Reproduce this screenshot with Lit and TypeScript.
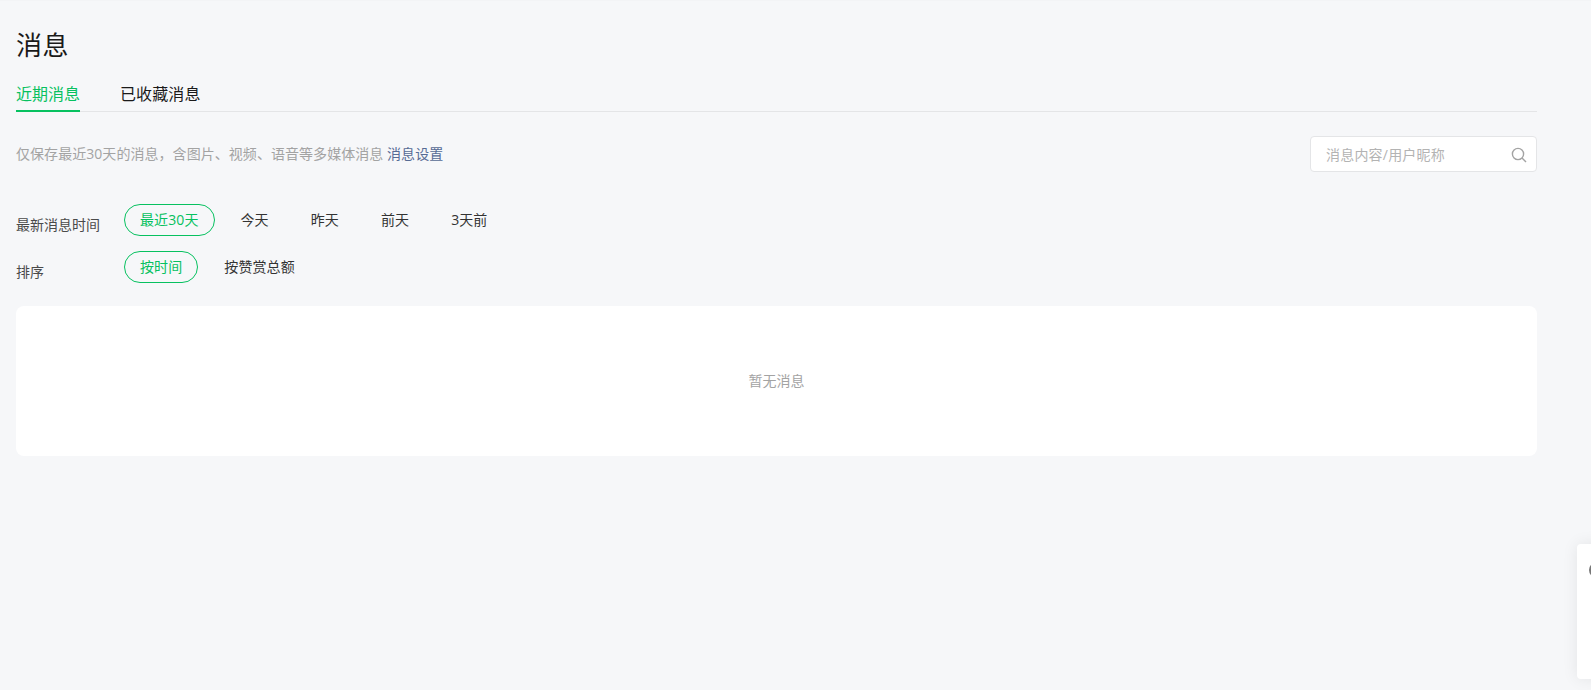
import { LitElement, html, css } from "lit";
import { customElement } from "lit/decorators.js";

@customElement("app-root")
export class AppRoot extends LitElement {
  static styles = css`
    :host {
      display: block;
      height: 690px;
      overflow: hidden;
      position: relative;
      background: #f6f7f9;
      font-family: "Open Sans", "Noto Sans CJK SC", "Liberation Sans", sans-serif;
      color: #1a1a1a;
    }
    .topshade { position: absolute; left: 0; right: 0; top: 0; height: 1px; background: #f3f4f6; }
    .page { width: 1521px; padding: 28px 0 0 16px; }
    h1 { margin: 0; font-size: 26px; line-height: 34px; font-weight: 400; color: #1a1a1a; letter-spacing: 0.5px; }
    .tabs { display: flex; gap: 40px; margin-top: 16px; border-bottom: 1px solid #e4e5e7; height: 34px; box-sizing: border-box; }
    .tab { font-size: 16px; line-height: 24px; height: 34px; box-sizing: border-box; padding-top: 4px; color: #1a1a1a; letter-spacing: 0.1px; }
    .tab.on { color: #07c160; border-bottom: 2px solid #07c160; letter-spacing: 0; }
    .hint-row { display: flex; justify-content: space-between; align-items: flex-start; margin-top: 24px; }
    .hint { font-size: 14px; line-height: 22px; color: #a3a3a3; margin-top: 7px; letter-spacing: 0.05px; }
    .hint a { color: #576b95; }
    .search {
      width: 227px; height: 36px; box-sizing: border-box; background: #fff;
      border: 1px solid #e4e5e7; border-radius: 4px; display: flex; align-items: center;
      justify-content: space-between; padding: 0 9px 0 15px; font-size: 14px; color: #b3b3b3;
      letter-spacing: 0.2px;
    }
    .search svg { margin-top: 1px; }
    .filters { display: grid; grid-template-columns: 108px 1fr; row-gap: 15px; margin-top: 32px; }
    .label { font-size: 14px; line-height: 20px; color: #4a4a4a; padding-top: 11px; }
    .pills { display: flex; gap: 10px; font-size: 14px; letter-spacing: 0.1px; }
    .pill {
      height: 32px; box-sizing: border-box; border: 1px solid transparent; border-radius: 16px;
      padding: 0 15px; line-height: 30px; color: #333; white-space: nowrap;
    }
    .pill.on { border-color: #07c160; color: #07c160; }
    .card {
      margin-top: 23px; height: 150px; background: #fff; border-radius: 8px; box-sizing: border-box;
      padding-bottom: 2px; display: flex; align-items: center; justify-content: center;
      font-size: 14px; color: #a3a3a3;
    }
    .float {
      position: absolute; left: 1577px; top: 544px; width: 40px; height: 135px; background: #fff;
      border-radius: 4px; box-shadow: 0 0 16px rgba(0, 0, 0, 0.08);
    }
    .float i {
      position: absolute; left: 12px; top: 18px; width: 16px; height: 16px;
      border: 2px solid #777; border-radius: 50%; box-sizing: border-box;
    }
  `;

  render() {
    const times = ["最近30天", "今天", "昨天", "前天", "3天前"];
    const sorts = ["按时间", "按赞赏总额"];
    return html`
      <div class="topshade"></div>
      <div class="page">
        <h1>消息</h1>
        <div class="tabs">
          <div class="tab on">近期消息</div>
          <div class="tab">已收藏消息</div>
        </div>
        <div class="hint-row">
          <div class="hint">仅保存最近30天的消息，含图片、视频、语音等多媒体消息 <a>消息设置</a></div>
          <div class="search">
            <span>消息内容/用户昵称</span>
            <svg width="16" height="16" viewBox="0 0 16 16" fill="none" stroke="#a3a3a3" stroke-width="1.4">
              <circle cx="7" cy="7" r="5.6"></circle>
              <path d="M11 11l4 4"></path>
            </svg>
          </div>
        </div>
        <div class="filters">
          <div class="label">最新消息时间</div>
          <div class="pills">
            ${times.map((t, i) => html`<div class="pill ${i === 0 ? "on" : ""}">${t}</div>`)}
          </div>
          <div class="label">排序</div>
          <div class="pills">
            ${sorts.map((t, i) => html`<div class="pill ${i === 0 ? "on" : ""}">${t}</div>`)}
          </div>
        </div>
        <div class="card">暂无消息</div>
      </div>
      <div class="float"><i></i></div>
    `;
  }
}
